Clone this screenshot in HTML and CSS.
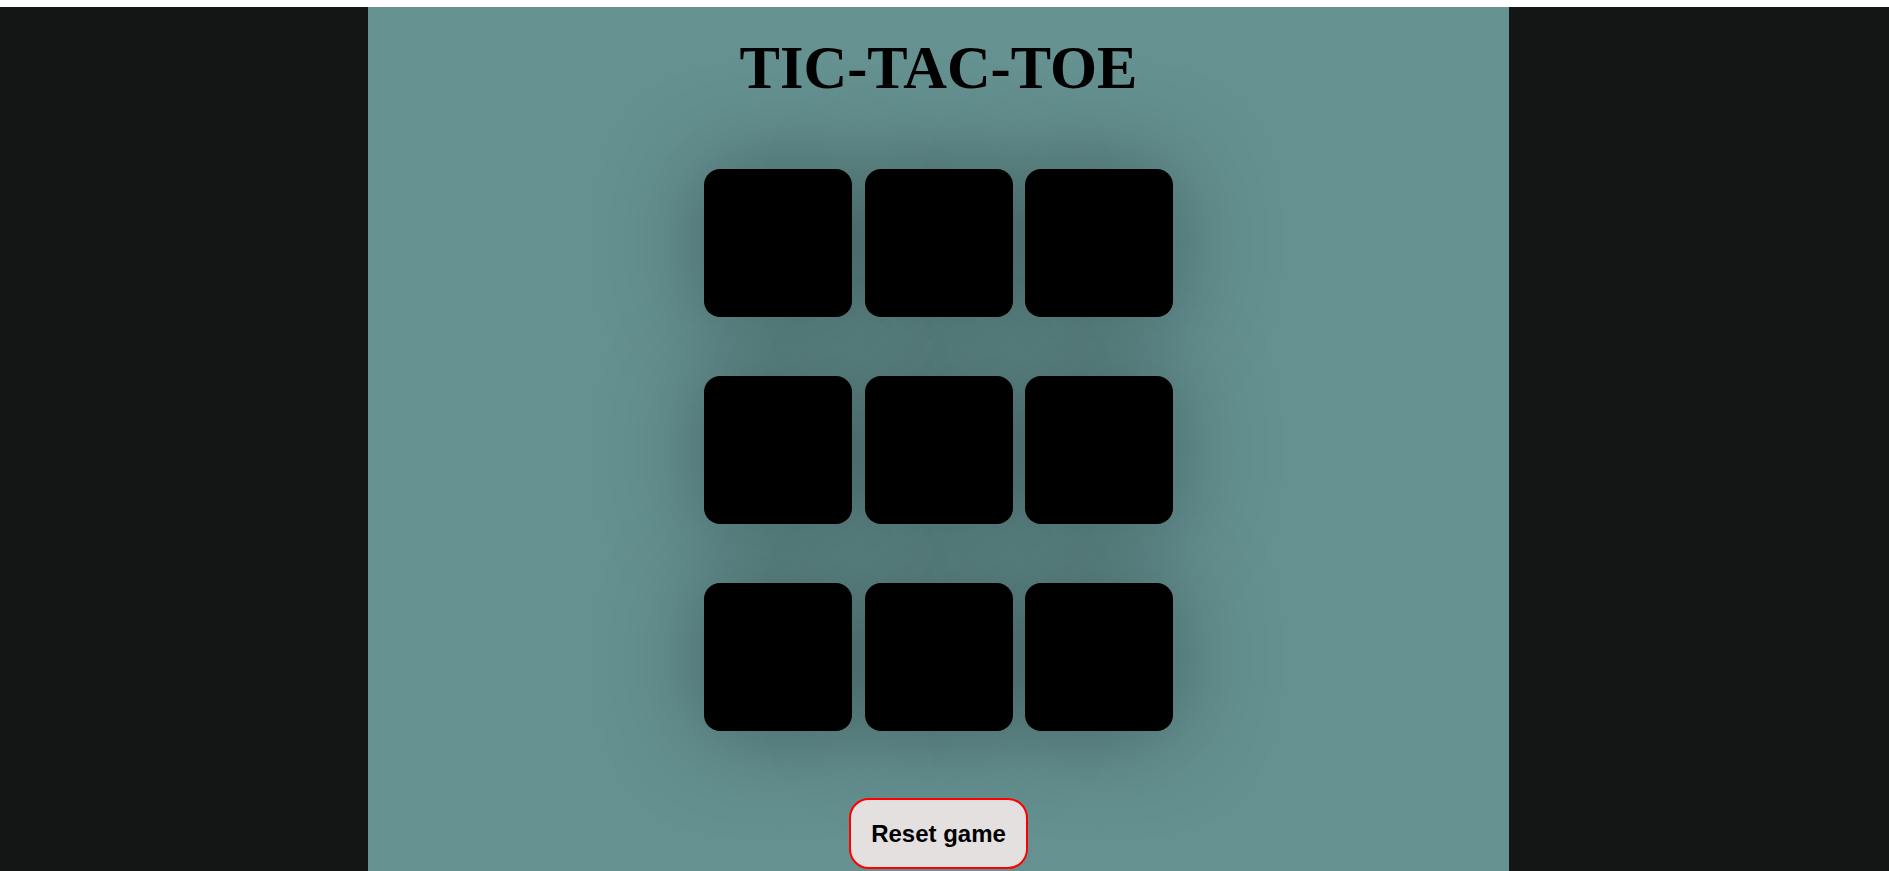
FILE: index.html
```html
<!DOCTYPE html>
<html lang="en">
<head>
<meta charset="utf-8">
<title>Tic-Tac-Toe</title>
<link rel="stylesheet" href="styles.css">
</head>
<body>
  <div class="topstrip"></div>
  <div class="layout">
    <div class="side side-left"></div>
    <main class="panel">
      <h1 class="title">TIC-TAC-TOE</h1>
      <div class="board">
        <button class="cell"></button>
        <button class="cell"></button>
        <button class="cell"></button>
        <button class="cell"></button>
        <button class="cell"></button>
        <button class="cell"></button>
        <button class="cell"></button>
        <button class="cell"></button>
        <button class="cell"></button>
      </div>
      <button class="reset">Reset game</button>
    </main>
    <div class="side side-right"></div>
  </div>
</body>
</html>
```

FILE: styles.css
```css
html, body {
  margin: 0;
  padding: 0;
  background: #ffffff;
}

.topstrip {
  height: 7px;
  background: #ffffff;
}

.layout {
  display: flex;
  min-height: 864px;
}

.side {
  background: #141615;
}

.side-left {
  width: 368px;
  flex: none;
}

.side-right {
  flex: 1;
}

.panel {
  width: 1141px;
  flex: none;
  background: #659191;
  display: flex;
  flex-direction: column;
  align-items: center;
  padding-bottom: 40px;
}

.title {
  margin: 26px 0 66px;
  font-family: "Liberation Serif", "Times New Roman", serif;
  font-weight: bold;
  font-size: 60.5px;
  line-height: 70px;
  color: #000000;
}

.board {
  display: grid;
  grid-template-columns: repeat(3, 148px);
  grid-template-rows: repeat(3, 148px);
  column-gap: 12.5px;
  row-gap: 59px;
}

.cell {
  display: block;
  width: 148px;
  height: 148px;
  border: none;
  padding: 0;
  background: #000000;
  border-radius: 16px;
  box-shadow: 0 0 100px rgba(0, 0, 0, 0.35);
}

.reset {
  margin-top: 67px;
  padding: 20px 20px;
  font-family: "Liberation Sans", Arial, sans-serif;
  font-weight: bold;
  font-size: 24px;
  line-height: 27px;
  color: #000000;
  background: #e5e0e0;
  border: 2px solid #ff0000;
  border-radius: 20px;
}
```
